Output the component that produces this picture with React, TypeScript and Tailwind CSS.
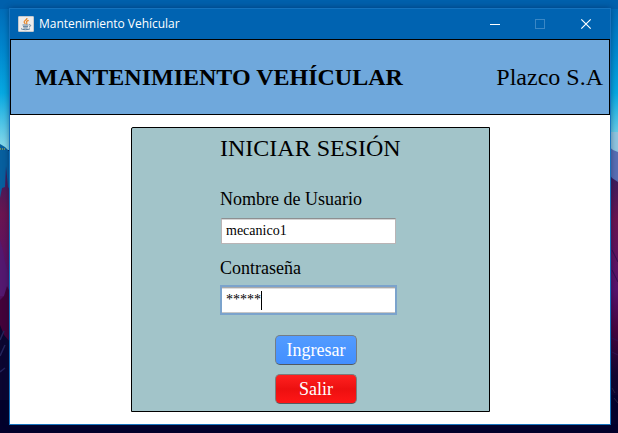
function Wallpaper() {
  return (
    <svg className="absolute inset-0" width="618" height="433" viewBox="0 0 618 433">
      <defs>
        <linearGradient id="sky" x1="0" y1="0" x2="0" y2="1">
          <stop offset="0" stopColor="#0067b4" />
          <stop offset="0.3" stopColor="#0084cc" />
          <stop offset="0.62" stopColor="#06a9e2" />
          <stop offset="1" stopColor="#8fdcea" />
        </linearGradient>
        <linearGradient id="forest" x1="0" y1="0" x2="0" y2="1">
          <stop offset="0" stopColor="#35205f" />
          <stop offset="0.18" stopColor="#6a1450" />
          <stop offset="0.45" stopColor="#56126c" />
          <stop offset="0.6" stopColor="#48043f" />
          <stop offset="0.78" stopColor="#12052f" />
          <stop offset="1" stopColor="#03002b" />
        </linearGradient>
      </defs>
      <rect width="618" height="150" fill="url(#sky)" />
      <rect width="618" height="9" fill="#0060ac" />
      <path d="M0 144 L5 147 L10 152 V220 H0Z" fill="#075f9e" />
      <path d="M0 149h6" stroke="#9aa34a" strokeWidth="1.5" strokeDasharray="1 1" />
      <path d="M608 132 H618 V200 H608Z" fill="#8fc6e0" />
      <path d="M608 146 L613 150 L618 152 V200 H608Z" fill="#586fb4" />
      <path d="M0 198 L2 188 L5 187 L6 166 L8 187 L10 190 V433 H0Z" fill="url(#forest)" />
      <path d="M608 172 L612 178 L618 182 V433 H608Z" fill="url(#forest)" />
      <path d="M0 240 L3 250 L5 262 L8 272 L10 290 L4 296 H0Z" fill="#54186f" />
      <path d="M4 296 L7 286 L10 292 V340 H0 V300Z" fill="#43023a" />
      <path d="M0 325 L4 335 L10 342 V433 H0Z" fill="#0b0530" />
      <path d="M0 340 L4 331 M0 356 L5 345 M0 372 L5 368" stroke="#25245b" strokeWidth="1.5" />
      <path d="M612 250 L618 262 M612 270 L618 282 M612 338 L618 341 M612 352 L618 355" stroke="#321050" />
      <rect y="400" width="10" height="33" fill="#02002b" />
      <rect x="608" y="395" width="10" height="38" fill="#05022c" />
      <rect y="424" width="618" height="9" fill="#02002b" />
      <path d="M612 388 l3 5 M614 398 l4 5" stroke="#252040" />
    </svg>
  );
}

function JavaIcon() {
  return (
    <svg width="16" height="16" viewBox="0 0 16 16" fill="none">
      <rect x="0.5" y="0.5" width="15" height="15" rx="0.5" fill="#ececec" stroke="#c3c8ce" />
      <path d="M9 2 C9.4 4 5.4 4.6 6.2 6.2 C6.5 7 7.2 7.3 7.2 8 M10.7 4.4 C8.6 5 8 5.8 8.8 6.8 C9.2 7.4 8.6 8 8.2 8.3" stroke="#e5872c" strokeWidth="1.2" />
      <path d="M4.5 9 H10.5 M5 10.6 H10 M5.4 12 H9.6 M11 8.8 C13.4 8.3 13 10.6 11 11 M3 12.7 C4.5 14 10 14 12 12.8" stroke="#5d7f9c" />
    </svg>
  );
}

export default function App() {
  return (
    <div className="relative h-[433px] w-[618px] overflow-hidden bg-[#02002b] pl-[9px] pt-2 font-['Liberation_Serif',serif] text-black">
      <Wallpaper />
      <div className="relative flex h-[417px] w-[602px] flex-col border border-[#1673be] bg-white shadow-[0_0_6px_rgba(0,20,60,0.45)]">
        <div className="flex h-[30px] shrink-0 items-center bg-[#0063b1] pl-2 text-white">
          <JavaIcon />
          <span className="ml-[5px] whitespace-nowrap font-['Open_Sans',sans-serif] text-[12px] leading-4 tracking-[-0.02px]">
            Mantenimiento Vehícular
          </span>
          <svg className="ml-auto mr-[17px]" width="103" height="12" viewBox="0 0 103 12" fill="none">
            <path d="M0 6.5h10" stroke="#fff" />
            <rect x="45.5" y="1.5" width="9" height="9" stroke="#3a87c5" />
            <path d="M91.3 1.3l9.4 9.4M100.7 1.3l-9.4 9.4" stroke="#fff" strokeWidth="1.2" />
          </svg>
        </div>
        <header className="flex h-[76px] shrink-0 items-center justify-between border border-black bg-[#6fa8dc] pl-6 pr-[6px] text-[24px] leading-7">
          <h1 className="whitespace-nowrap font-bold">MANTENIMIENTO VEHÍCULAR</h1>
          <span className="whitespace-nowrap">Plazco S.A</span>
        </header>
        <main className="ml-[121px] mt-3 flex h-[285px] w-[359px] flex-col items-start rounded-tl-[2px] border border-black bg-[#a2c4c9] pl-[88px]">
          <h2 className="mt-[6px] whitespace-nowrap text-[24px] leading-7">INICIAR SESIÓN</h2>
          <label className="mt-[27px] whitespace-nowrap text-[18px] leading-5">Nombre de Usuario</label>
          <div className="ml-px mt-[9px] flex h-[26px] w-[175px] items-center border border-[#b9b4b5] border-t-[#8d8f91] bg-white pl-1 text-[14px] leading-4 shadow-[inset_0_1px_0_#d4d4d4]">
            mecanico1
          </div>
          <label className="mt-[14px] whitespace-nowrap text-[18px] leading-5">Contraseña</label>
          <div className="mt-[7px] flex h-[30px] w-[177px] items-center border-2 border-[#7ba3cc] bg-white pl-1 text-[14px] leading-4 shadow-[inset_0_1px_0_#a9a9a9,inset_0_2px_0_#dedede,inset_0_-1px_0_#c6c6c6]">
            <span>*****</span>
            <span className="h-[19px] w-px bg-black" />
          </div>
          <button className="ml-[55px] mt-5 h-[30px] w-[82px] rounded-[5px] border border-[#747d85] border-b-[#505961] bg-linear-to-b from-[#539bff] to-[#428fff] text-[18px] leading-7 text-white">
            Ingresar
          </button>
          <button className="ml-[55px] mt-[9px] h-[30px] w-[82px] rounded-[5px] border border-[#7c7b7c] border-b-[#555b60] bg-linear-to-b from-[#ff201f] via-[#ed1010] to-[#ff1616] text-[18px] leading-7 text-white">
            Salir
          </button>
        </main>
      </div>
    </div>
  );
}
